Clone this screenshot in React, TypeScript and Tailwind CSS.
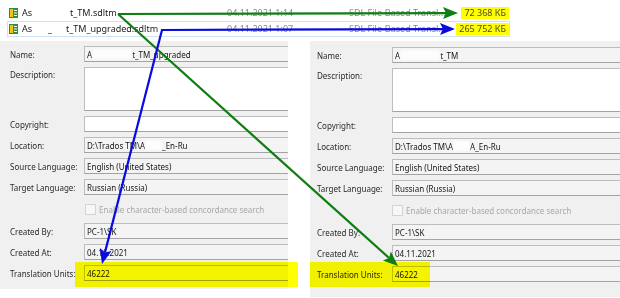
import type { ReactNode } from 'react';

interface FieldProps {
  label: string;
  children?: ReactNode;
  white?: boolean;
  tall?: boolean;
  labelWidth: string;
}

function Field({ label, children, white = false, tall = false, labelWidth }: FieldProps) {
  return (
    <div className={`flex ${tall ? 'items-start' : 'items-center'}`}>
      <div className={`${labelWidth} shrink-0 text-[#2a2a2a] ${tall ? 'pt-[2px]' : ''}`}>{label}</div>
      <div
        className={`-mr-[6px] flex flex-1 items-center whitespace-nowrap border border-[#bdbdbd] border-b-[#a3a3a3] pl-[2px] text-[#151515] ${
          white ? 'bg-white' : 'bg-[#f4f4f4]'
        } ${tall ? 'h-[44px]' : 'h-[16px]'}`}>
        {children}
      </div>
    </div>
  );
}

// white smudge that hides part of a name
function Blur({ w }: { w: string }) {
  return <span className={`inline-block h-[10px] ${w} rounded-sm bg-[#fdfdfd] blur-[1px]`} />;
}

interface PanelProps {
  upgraded: boolean;
  padding: string;
  labelWidth: string;
  checkboxPad: string;
  className: string;
}

function TmPanel({ upgraded, padding, labelWidth, checkboxPad, className }: PanelProps) {
  return (
    <div className={`flex flex-col gap-[5px] overflow-hidden bg-[#f0f0f0] text-[8px] leading-[11px] ${padding} ${className}`}>
      <Field label="Name:" labelWidth={labelWidth}>
        A<Blur w="w-[40px]" />
        {upgraded ? 't_TM_upgraded' : 't_TM'}
      </Field>
      <Field label="Description:" labelWidth={labelWidth} white tall />
      <Field label="Copyright:" labelWidth={labelWidth} white />
      <Field label="Location:" labelWidth={labelWidth}>
        D:\Trados TM\A<Blur w="w-[17px]" />
        {upgraded ? '_En-Ru' : 'A_En-Ru'}
      </Field>
      <Field label="Source Language:" labelWidth={labelWidth}>
        English (United States)
      </Field>
      <Field label="Target Language:" labelWidth={labelWidth}>
        Russian (Russia)
      </Field>
      <div className={`flex h-[18px] items-center gap-[3px] ${checkboxPad}`}>
        <span className="h-[11px] w-[11px] border border-[#d4d4d4] bg-[#f7f7f7]" />
        <span className="text-[#a8a8a8]">Enable character-based concordance search</span>
      </div>
      <Field label="Created By:" labelWidth={labelWidth}>
        PC-1\SK
      </Field>
      <Field label="Created At:" labelWidth={labelWidth}>
        04.11.2021
      </Field>
      <Field label="Translation Units:" labelWidth={labelWidth}>
        46222
      </Field>
    </div>
  );
}

interface FileRowProps {
  name: ReactNode;
  date: string;
  size: string;
  focused?: boolean;
}

function FileRow({ name, date, size, focused = false }: FileRowProps) {
  return (
    <div
      className={`ml-[7px] flex h-[16px] w-[503px] items-center border ${
        focused ? 'border-[#cfe2f3]' : 'border-transparent'
      }`}>
      <svg width="9" height="10" viewBox="0 0 9 10" className="ml-[1px] shrink-0">
        <rect x="0" y="0" width="9" height="10" fill="#2f8f34" />
        <rect x="1" y="1" width="3" height="8" fill="#f1c40f" />
        <rect x="5" y="2" width="3" height="1" fill="#ffffff" />
        <rect x="5" y="4.5" width="3" height="1" fill="#ffffff" />
        <rect x="5" y="7" width="3" height="1" fill="#ffffff" />
      </svg>
      <div className="ml-[4px] w-[205px] shrink-0 whitespace-nowrap text-[#1b1b1b]">{name}</div>
      <div className="w-[122px] shrink-0 text-[#8a8a8a]">{date}</div>
      <div className="w-[92px] shrink-0 whitespace-nowrap text-[#8a8a8a]">SDL File-Based Transl...</div>
      <div className="flex flex-1 justify-end">
        <span className="bg-[#ffff00] px-[3px] text-[9px] leading-[12px] text-[#4a4a28]">{size}</span>
      </div>
    </div>
  );
}

interface ArrowProps {
  x1: number;
  y1: number;
  x2: number;
  y2: number;
  color: string;
}

function Arrow({ x1, y1, x2, y2, color }: ArrowProps) {
  const len = Math.hypot(x2 - x1, y2 - y1);
  const ux = (x2 - x1) / len;
  const uy = (y2 - y1) / len;
  const bx = x2 - ux * 15;
  const by = y2 - uy * 15;
  const nx = -uy * 6;
  const ny = ux * 6;
  const points = `${x2},${y2} ${bx + nx},${by + ny} ${bx + ux * 3},${by + uy * 3} ${bx - nx},${by - ny}`;
  return (
    <g>
      <line x1={x1} y1={y1} x2={bx + ux * 3} y2={by + uy * 3} stroke={color} strokeWidth={2.2} />
      <polygon points={points} fill={color} />
    </g>
  );
}

export default function App() {
  return (
    <div className="relative h-[298px] w-[620px] overflow-hidden bg-white font-['Noto_Sans',sans-serif]">
      <div className="pt-[5px] text-[9px] leading-[12px]">
        <FileRow
          name={
            <>
              As<span className="inline-block w-[38px]" />
              t_TM.sdltm
            </>
          }
          date="04.11.2021 1:14"
          size="72 368 КБ"
        />
        <FileRow
          focused
          name={
            <>
              As<span className="inline-block w-[16px]" />_<span className="inline-block w-[14px]" />
              t_TM_upgraded.sdltm
            </>
          }
          date="04.11.2021 1:07"
          size="265 752 КБ"
        />
      </div>

      <div className="mt-[4px] flex gap-[22px]">
        <TmPanel
          upgraded
          padding="pt-[5px] pl-[10px]"
          labelWidth="w-[74px]"
          checkboxPad="pl-[75px]"
          className="h-[248px] w-[288px] shrink-0"
        />
        <TmPanel
          upgraded={false}
          padding="pt-[6px] pl-[7px]"
          labelWidth="w-[75px]"
          checkboxPad="pl-[75px]"
          className="h-[256px] flex-1"
        />
      </div>

      {/* highlighter marks */}
      <div className="pointer-events-none absolute left-[75px] top-[262px] h-[25px] w-[223px] bg-[#ffff00] mix-blend-multiply" />
      <div className="pointer-events-none absolute left-[310px] top-[262px] h-[25px] w-[120px] bg-[#ffff00] mix-blend-multiply" />

      <svg className="pointer-events-none absolute inset-0" width="620" height="298" viewBox="0 0 620 298">
        <Arrow x1={118} y1={14} x2={458} y2={13} color="#0f7d12" />
        <Arrow x1={118} y1={14} x2={398} y2={266} color="#0f7d12" />
        <Arrow x1={161} y1={30} x2={455} y2={29} color="#0a0ae0" />
        <Arrow x1={162} y1={30} x2={102} y2={264} color="#0a0ae0" />
      </svg>
    </div>
  );
}
